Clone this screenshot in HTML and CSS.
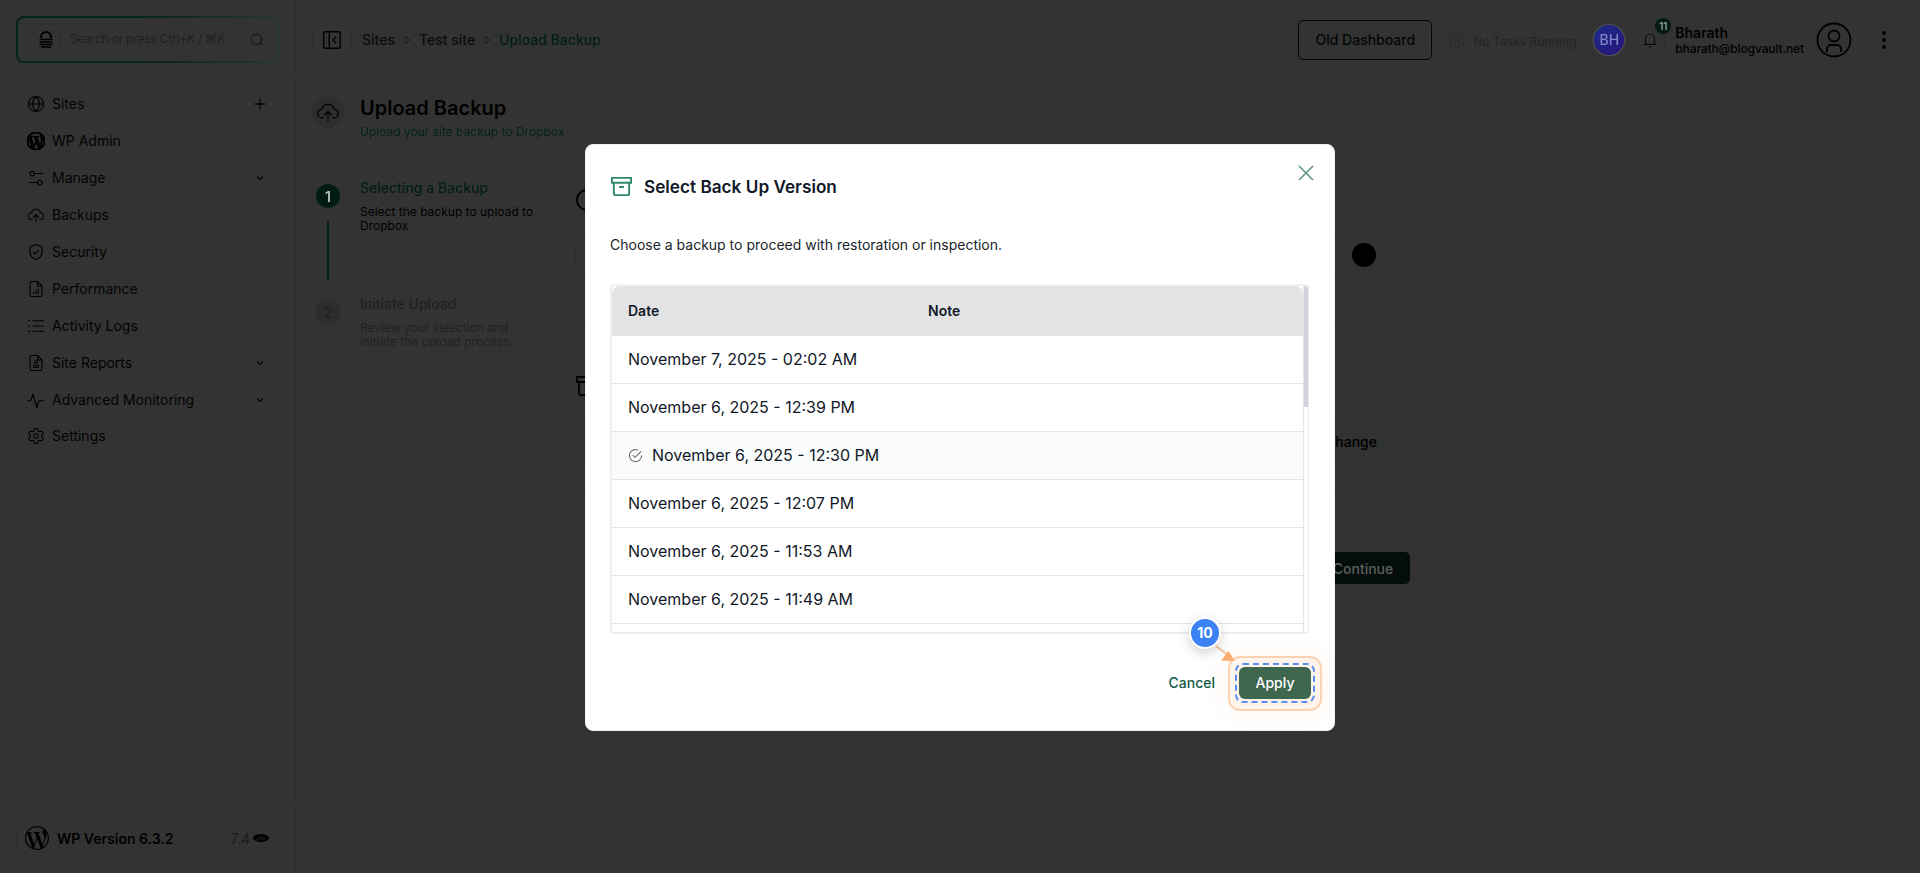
FILE: index.html
```html
<!DOCTYPE html>
<html lang="en">
<head>
  <meta charset="UTF-8">
  <title>Upload Backup</title>
  <link rel="stylesheet" href="styles.css">
</head>
<body>

  <svg class="defs" width="0" height="0">
    <symbol id="wp" viewBox="0 0 24 24">
      <path fill="currentColor" d="M21.469 6.825c.84 1.537 1.318 3.3 1.318 5.175 0 3.979-2.156 7.456-5.363 9.325l3.295-9.527c.615-1.54.82-2.771.82-3.864 0-.405-.026-.78-.07-1.11m-7.981.105c.647-.03 1.232-.105 1.232-.105.582-.075.514-.93-.067-.899 0 0-1.755.135-2.88.135-1.064 0-2.85-.15-2.85-.15-.585-.03-.661.855-.075.885 0 0 .54.061 1.125.09l1.68 4.605-2.37 7.08L5.354 6.9c.649-.03 1.234-.1 1.234-.1.585-.075.516-.93-.065-.896 0 0-1.746.138-2.874.138-.2 0-.438-.008-.69-.015C4.911 3.15 8.235 1.215 12 1.215c2.809 0 5.365 1.072 7.286 2.833-.046-.003-.091-.009-.141-.009-1.06 0-1.812.923-1.812 1.914 0 .89.513 1.643 1.06 2.531.411.72.89 1.643.89 2.977 0 .915-.354 1.994-.821 3.479l-1.075 3.585-3.9-11.61.001.014zM12 22.784c-1.059 0-2.081-.153-3.048-.437l3.237-9.406 3.315 9.087c.024.053.05.101.078.149-1.12.393-2.325.609-3.582.609M1.211 12c0-1.564.336-3.05.935-4.39L7.29 21.709C3.694 19.96 1.212 16.271 1.211 12M12 0C5.385 0 0 5.385 0 12s5.385 12 12 12 12-5.385 12-12S18.615 0 12 0"/>
    </symbol>
    <symbol id="cloud" viewBox="0 0 24 24">
      <path d="M7 18H6.500A4.500 4.500 0 0 1 6 9a6.200 6.200 0 0 1 12 0 4.500 4.500 0 0 1-.5 9H17M12 21v-9M8.500 15l3.500-3.500 3.500 3.500"/>
    </symbol>
    <symbol id="archive" viewBox="0 0 24 24">
      <path d="M2 3h20v5H2zM4 8v11a2 2 0 0 0 2 2h12a2 2 0 0 0 2-2V8M9.500 12.500h5"/>
    </symbol>
    <symbol id="chev" viewBox="0 0 12 12">
      <path d="M3 4.500 6 7.500 9 4.500"/>
    </symbol>
  </svg>

  <div class="app">
    <!-- sidebar -->
    <aside class="sidebar">
      <div class="side-top">
        <div class="search-box above">
          <span class="lock-box">
            <svg class="lock-ico" viewBox="0 0 18 18"><path d="M4 7V6a5 5 0 0 1 10 0v1" stroke-width="2"/><path d="M2.500 8.500h13M2.500 11h13M2.500 13.500h13M4 16h10" stroke-width="1.500"/></svg>
          </span>
          <span class="search-text">Search or press Ctrl+K / ⌘K</span>
          <svg class="ico search-ico" viewBox="0 0 24 24"><circle cx="11" cy="11" r="8"/><path d="m20 20-3-3"/></svg>
        </div>
      </div>

      <nav class="side-nav">
        <a class="nav-row">
          <svg class="ico" viewBox="0 0 24 24"><circle cx="12" cy="12" r="10"/><path d="M2 12h20M12 2c-6 6-6 14 0 20M12 2c6 6 6 14 0 20"/></svg>
          <span>Sites</span>
          <svg class="nav-plus" viewBox="0 0 14 14"><path d="M7 1v12M1 7h12"/></svg>
        </a>
        <a class="nav-row">
          <svg class="ico ico-wp"><use href="#wp"/></svg>
          <span>WP Admin</span>
        </a>
        <a class="nav-row">
          <svg class="ico" viewBox="0 0 24 24"><circle cx="7" cy="6" r="3"/><circle cx="17" cy="18" r="3"/><path d="M10 6h11M3 18h11"/></svg>
          <span>Manage</span>
          <svg class="nav-chev"><use href="#chev"/></svg>
        </a>
        <a class="nav-row">
          <svg class="ico"><use href="#cloud"/></svg>
          <span>Backups</span>
        </a>
        <a class="nav-row">
          <svg class="ico" viewBox="0 0 24 24"><path d="M12 2 4 5v7c0 5 3.500 8.500 8 10 4.500-1.500 8-5 8-10V5zM8.500 12l2.500 2.500 4.500-4.500"/></svg>
          <span>Security</span>
        </a>
        <a class="nav-row">
          <svg class="ico" viewBox="0 0 24 24"><path d="M14 2H6a2 2 0 0 0-2 2v16a2 2 0 0 0 2 2h12a2 2 0 0 0 2-2V8zM14 2v6h6M9 18v-2M12 18v-4M15 18v-6"/></svg>
          <span>Performance</span>
        </a>
        <a class="nav-row">
          <svg class="ico" viewBox="0 0 24 24"><path d="M8 5h14M8 12h14M8 19h14M2 5h2M2 12h2M2 19h2"/></svg>
          <span>Activity Logs</span>
        </a>
        <a class="nav-row">
          <svg class="ico" viewBox="0 0 24 24"><path d="M14 2H6a2 2 0 0 0-2 2v16a2 2 0 0 0 2 2h12a2 2 0 0 0 2-2V8zM14 2v6h6"/><circle cx="12" cy="11" r="2"/><path d="M9 18v-3h6v3z"/></svg>
          <span>Site Reports</span>
          <svg class="nav-chev"><use href="#chev"/></svg>
        </a>
        <a class="nav-row">
          <svg class="ico" viewBox="0 0 24 24"><path d="M1 13h4l3-9 5 18 3-9h6"/></svg>
          <span>Advanced Monitoring</span>
          <svg class="nav-chev"><use href="#chev"/></svg>
        </a>
        <a class="nav-row">
          <svg class="ico" viewBox="0 0 24 24"><circle cx="12" cy="12" r="3"/><path d="M10 2h4l.6 3 2.400 1.400 2.900-1 2 3.500-2.300 2v2.200l2.300 2-2 3.500-2.900-1L14.600 19l-.6 3h-4l-.6-3L7 17.600l-2.900 1-2-3.500 2.300-2v-2.200l-2.300-2 2-3.500 2.900 1L9.400 5z"/></svg>
          <span>Settings</span>
        </a>
      </nav>

      <div class="side-foot">
        <div class="wp-card">
          <svg class="wp-logo"><use href="#wp"/></svg>
          <span class="wp-name">WP Version 6.3.2</span>
          <span class="php-num">7.4</span>
          <svg class="php-badge" viewBox="0 0 16 8"><ellipse cx="8" cy="4" rx="8" ry="4"/><text x="8" y="5.800" text-anchor="middle">php</text></svg>
        </div>
      </div>
    </aside>

    <div class="main">
      <!-- top bar -->
      <header class="topbar">
        <button class="toggle-btn">
          <svg class="ico" viewBox="0 0 24 24"><rect x="3" y="3" width="18" height="18" rx="2"/><path d="M9 3v18M16 9l-3 3 3 3" /></svg>
        </button>
        <div class="crumbs">
          <span>Sites</span>
          <svg class="crumb-sep" viewBox="0 0 12 12"><path d="m4 2 4 4-4 4"/></svg>
          <span>Test site</span>
          <svg class="crumb-sep" viewBox="0 0 12 12"><path d="m4 2 4 4-4 4"/></svg>
          <span class="crumb-now above">Upload Backup</span>
        </div>
        <div class="top-right">
          <button class="old-btn">Old Dashboard</button>
          <div class="tasks">
            <svg class="ico" viewBox="0 0 24 24"><rect x="3" y="3" width="18" height="18" rx="3" stroke-dasharray="2 2"/><path d="M9 8v8M12 8v5M15 8v8" stroke-dasharray="2 1"/></svg>
            <span>No Tasks Running</span>
          </div>
          <div class="bh above">BH</div>
          <div class="bell">
            <svg class="ico" viewBox="0 0 24 24"><path d="M6 17V10a6 6 0 0 1 12 0v7l2 1H4zM11 21h2"/></svg>
            <span class="bell-num">11</span>
          </div>
          <div class="user">
            <div class="user-name">Bharath</div>
            <div class="user-mail">bharath@blogvault.net</div>
          </div>
          <svg class="avatar" viewBox="0 0 36 36"><circle cx="18" cy="18" r="16.500"/><circle cx="18" cy="14" r="5.500"/><path d="M11 30v-3a4 4 0 0 1 4-4h6a4 4 0 0 1 4 4v3"/></svg>
          <div class="dots"><i></i><i></i><i></i></div>
        </div>
      </header>

      <div class="page-title">
        <span class="title-ico"><svg class="ico"><use href="#cloud"/></svg></span>
        <div>
          <h1>Upload Backup</h1>
          <p class="above">Upload your site backup to Dropbox</p>
        </div>
      </div>

      <div class="content">
        <!-- steps -->
        <div class="steps">
          <div class="step">
            <div class="step-mark">
              <span class="step-num above">1</span>
              <span class="step-line above"></span>
            </div>
            <div>
              <div class="step-title above">Selecting a Backup</div>
              <div class="step-desc">Select the backup to upload to Dropbox</div>
            </div>
          </div>
          <div class="step step-off">
            <div class="step-mark">
              <span class="step-num">2</span>
            </div>
            <div>
              <div class="step-title">Initiate Upload</div>
              <div class="step-desc">Review your selection and initiate the upload process.</div>
            </div>
          </div>
        </div>

        <!-- panel behind the modal -->
        <div class="panel">
          <svg class="panel-ico" viewBox="0 0 24 24"><circle cx="12" cy="12" r="10"/></svg>
          <div class="panel-box">
            <span class="black-dot"></span>
          </div>
          <div class="panel-sep"></div>
          <svg class="panel-ico panel-ico2"><use href="#archive"/></svg>
          <div class="panel-box panel-box2">
            <span class="change-btn">Change</span>
          </div>
          <div class="panel-sep panel-sep2"></div>
          <div class="panel-foot">
            <button class="continue-btn above">Continue</button>
          </div>
        </div>
      </div>
    </div>
  </div>

  <div class="backdrop"></div>

  <!-- modal -->
  <div class="modal-wrap">
    <div class="modal">
      <div class="modal-head">
        <svg class="modal-ico"><use href="#archive"/></svg>
        <h2>Select Back Up Version</h2>
        <svg class="modal-close" viewBox="0 0 16 16"><path d="m1 1 14 14M15 1 1 15"/></svg>
      </div>
      <p class="modal-desc">Choose a backup to proceed with restoration or inspection.</p>

      <div class="table-box">
        <div class="table-scroll">
          <div class="t-head">
            <span class="t-date">Date</span>
            <span>Note</span>
          </div>
          <div class="t-row">November 7, 2025 - 02:02 AM</div>
          <div class="t-row">November 6, 2025 - 12:39 PM</div>
          <div class="t-row t-sel">
            <svg class="sel-ico" viewBox="0 0 16 16"><path d="M14.500 8A6.500 6.500 0 1 1 11 2.300"/><path d="m5 7.500 2.500 2.500L14 3.500"/></svg>
            November 6, 2025 - 12:30 PM
          </div>
          <div class="t-row">November 6, 2025 - 12:07 PM</div>
          <div class="t-row">November 6, 2025 - 11:53 AM</div>
          <div class="t-row">November 6, 2025 - 11:49 AM</div>
        </div>
        <div class="scroll-track"><div class="scroll-thumb"></div></div>
      </div>

      <div class="modal-foot">
        <button class="cancel-btn">Cancel</button>
        <div class="apply-wrap">
          <button class="apply-btn">Apply</button>
          <svg class="tip-arrow" viewBox="0 0 24 20"><path d="M1 1 14 11"/><path class="tip-head" d="M20 16 6 15.500 13.500 6z"/></svg>
          <span class="tip-badge">10</span>
        </div>
      </div>
    </div>
  </div>

</body>
</html>
```

FILE: styles.css
```css
* {
  box-sizing: border-box;
}

body {
  margin: 0;
  height: 873px;
  overflow: hidden;
  font-family: Inter, "Noto Sans", sans-serif;
  font-size: 14px;
  color: #111827;
  background-color: #fff;
}

button {
  font: inherit;
  cursor: pointer;
}

.defs {
  position: absolute;
}

/* keeps its colour: sits over the backdrop, so colours here are the final ones */
.above {
  position: relative;
  z-index: 20;
}

.ico {
  width: 18px;
  height: 18px;
  flex: none;
  fill: none;
  stroke: #000;
  stroke-width: 1.5;
  stroke-linecap: round;
  stroke-linejoin: round;
}

.ico-wp {
  color: #222;
}

.app {
  display: flex;
  height: 873px;
}

/* Sidebar */
.sidebar {
  width: 296px;
  flex: none;
  display: flex;
  flex-direction: column;
  border-right: 1px solid #e5e7eb;
}

.side-top {
  height: 80px;
  flex: none;
  padding: 16px 16px 0 16px;
  border-bottom: 1px solid #e5e7eb;
}

.search-box {
  height: 47px;
  display: flex;
  align-items: center;
  padding: 0 12px;
  border: 2px solid transparent;
  border-radius: 8px;
  background: linear-gradient(#333, #333) padding-box,
    linear-gradient(90deg, #02241a, #02241a 45%, #2a3630) border-box;
}

.lock-box {
  width: 31px;
  height: 31px;
  display: flex;
  align-items: center;
  justify-content: center;
  border: 1px solid #2e2e2e;
  border-radius: 6px;
}

.lock-ico {
  width: 18px;
  height: 18px;
  fill: none;
  stroke: #000;
}

.search-text {
  flex: 1;
  margin: -3px 0 0 9px;
  font-size: 12px;
  letter-spacing: -0.2px;
  color: #212121;
  white-space: nowrap;
}

.search-ico {
  width: 16px;
  height: 16px;
  stroke: #0e0e0e;
  stroke-width: 1.4;
}

.side-nav {
  flex: 1;
  padding: 5px 0 0;
}

.nav-row {
  height: 37px;
  display: flex;
  align-items: center;
  gap: 7px;
  padding: 0 29px 0 27px;
  color: #0d0d0d;
}

.nav-row:last-child {
  margin-top: -1px;
}

.nav-row span {
  flex: 1;
}

.nav-plus {
  width: 12px;
  height: 12px;
  fill: none;
  stroke: #111;
  stroke-width: 1.500;
}

.nav-chev {
  width: 12px;
  height: 12px;
  fill: none;
  stroke: #111;
  stroke-width: 1.200;
}

.side-foot {
  height: 73px;
  padding: 16px 17px 0 16px;
  border-top: 1px solid #e5e7eb;
}

.wp-card {
  height: 42px;
  display: flex;
  align-items: center;
  padding: 0 8px;
  border: 1px solid #e4e6e9;
  border-radius: 8px;
}

.wp-logo {
  width: 24px;
  height: 24px;
  color: #000;
}

.wp-name {
  flex: 1;
  margin-left: 8px;
  font-weight: 600;
  color: #000;
}

.php-num {
  margin-right: 3px;
  color: #8f8f8f;
}

.php-badge {
  width: 16px;
  height: 8px;
  fill: #000;
}

.php-badge text {
  font-size: 5.500px;
  font-family: "Liberation Sans", sans-serif;
  fill: #bbb;
}

/* Main */
.main {
  flex: 1;
  min-width: 0;
  display: flex;
  flex-direction: column;
}

.topbar {
  height: 80px;
  flex: none;
  display: flex;
  align-items: center;
  padding-left: 16px;
  border-bottom: 1px solid #e5e7eb;
}

.toggle-btn {
  width: 40px;
  height: 40px;
  display: flex;
  align-items: center;
  justify-content: center;
  padding: 0;
  background: none;
  border: 1px solid #e4e6e9;
  border-radius: 6px;
}

.toggle-btn .ico {
  width: 22px;
  height: 22px;
}

.crumbs {
  display: flex;
  align-items: center;
  margin-left: 10px;
  font-weight: 500;
  color: #374151;
}

.crumb-sep {
  width: 12px;
  height: 12px;
  margin: 0 6px;
  fill: none;
  stroke: #444;
  stroke-width: 1;
}

.crumb-now {
  color: #021f16;
}

.top-right {
  margin-left: auto;
  display: flex;
  align-items: center;
}

.old-btn {
  width: 134px;
  height: 40px;
  font-weight: 500;
  color: #06281c;
  background: none;
  border: 1px solid #06281c;
  border-radius: 5px;
}

.tasks {
  width: 144px;
  height: 41px;
  margin-left: 9px;
  display: flex;
  align-items: center;
  gap: 7px;
  padding: 4px 0 0 6px;
  font-size: 12px;
  font-weight: 500;
  color: #b5b8bd;
  white-space: nowrap;
  border: 1px solid #eceef0;
  border-radius: 6px;
}

.tasks .ico {
  stroke: #aaa;
  stroke-width: 1.200;
  margin-top: -4px;
}

.bh {
  width: 30px;
  height: 30px;
  margin-left: 9px;
  display: flex;
  align-items: center;
  justify-content: center;
  font-weight: 500;
  color: #7f86c6;
  background: linear-gradient(135deg, #1c2a8c, #2a1478);
  border-radius: 50%;
  box-shadow: 0 0 0 1.500px #4c4c50;
}

.bell {
  position: relative;
  width: 31px;
  height: 32px;
  margin-left: 10px;
  display: flex;
  align-items: center;
  justify-content: center;
  border: 1px solid #e4e6e9;
  border-radius: 5px;
}

.bell .ico {
  stroke-width: 1.200;
  stroke: #111;
}

.bell-num {
  position: absolute;
  top: -7px;
  right: -7px;
  z-index: 20;
  width: 16px;
  height: 16px;
  display: flex;
  align-items: center;
  justify-content: center;
  font-size: 10px;
  font-weight: 500;
  color: #a8b0ac;
  background-color: #021c13;
  border-radius: 50%;
}

.user {
  margin-left: 10px;
  color: #000;
}

.user-name {
  font-weight: 600;
  line-height: 17px;
}

.user-mail {
  font-size: 12px;
  font-weight: 500;
  letter-spacing: -0.120px;
  line-height: 15px;
}

.avatar {
  width: 36px;
  height: 36px;
  margin-left: 12px;
  fill: none;
  stroke: #000;
  stroke-width: 1.800;
}

.dots {
  width: 4px;
  margin: 0 34px 0 30px;
  display: flex;
  flex-direction: column;
  gap: 3px;
}

.dots i {
  width: 4px;
  height: 4px;
  background-color: #000;
  border-radius: 50%;
}

.page-title {
  height: 75px;
  flex: none;
  display: flex;
  align-items: flex-start;
  padding: 16px 0 0 16px;
  border-bottom: 1px solid #e5e7eb;
}

.title-ico {
  width: 32px;
  height: 32px;
  flex: none;
  margin-right: 16px;
  display: flex;
  align-items: center;
  justify-content: center;
  background-color: #e5e7eb;
  border-radius: 50%;
}

.title-ico .ico {
  width: 24px;
  height: 24px;
  stroke-width: 1.300;
}

.page-title h1 {
  margin: 0;
  font-size: 20px;
  line-height: 24px;
  font-weight: 600;
  color: #000;
}

.page-title p {
  margin: 4px 0 0;
  font-size: 12px;
  line-height: 16px;
  color: #02241a;
}

.content {
  flex: 1;
  display: flex;
}

.steps {
  width: 246px;
  flex: none;
  padding: 26px 0 0 20px;
  border-right: 1px solid #e5e7eb;
}

.step {
  display: flex;
  gap: 20px;
}

.step-mark {
  width: 24px;
  flex: none;
  padding-top: 3px;
  display: flex;
  flex-direction: column;
  align-items: center;
}

.step-num {
  width: 24px;
  height: 24px;
  display: flex;
  align-items: center;
  justify-content: center;
  font-weight: 600;
  color: #b8c4bd;
  background-color: #021c13;
  border-radius: 50%;
}

.step-line {
  width: 2px;
  height: 60px;
  margin: 12px 0 17px;
  background-color: #02241a;
}

.step-title {
  font-weight: 500;
  line-height: 14px;
  color: #021f16;
  margin-bottom: 10px;
}

.step-desc {
  font-size: 12px;
  line-height: 14px;
  color: #000;
}

.step-off .step-title,
.step-off .step-desc {
  color: #a3a7ad;
}

.step-off .step-num {
  color: #9ca3af;
  background-color: #dcdde0;
}

.panel {
  flex: 1;
  padding: 0 526px 0 33px;
}

.panel-ico {
  display: block;
  width: 24px;
  height: 24px;
  margin-top: 33px;
  fill: none;
  stroke: #000;
  stroke-width: 1.800;
}

.panel-box {
  height: 42px;
  margin-top: 22px;
  display: flex;
  align-items: center;
  justify-content: flex-end;
  padding-right: 17px;
  border: 1px solid #e4e6e9;
  border-radius: 10px;
}

.black-dot {
  width: 24px;
  height: 24px;
  background-color: #000;
  border-radius: 50%;
}

.panel-sep {
  height: 1px;
  margin-top: 48px;
  background-color: #e5e7eb;
}

.panel-ico2 {
  margin-top: 49px;
}

.panel-box2 {
  height: 43px;
  margin-top: 21px;
  border: 0;
  padding: 2px 17px 0 0;
  background-color: #f6f7fa;
  border-radius: 6px;
}

.change-btn {
  font-weight: 500;
  color: #000;
}

.panel-sep2 {
  margin-top: 33px;
}

.panel-foot {
  display: flex;
  justify-content: flex-end;
  margin: 56px -16px 0 0;
}

.continue-btn {
  width: 100px;
  height: 32px;
  padding: 0 0 0 6px;
  font-weight: 500;
  color: #5f5f5f;
  background-color: #030d0a;
  border: 0;
  border-radius: 5px;
}

/* Modal */
.backdrop {
  position: fixed;
  inset: 0;
  z-index: 10;
  background-color: rgba(0, 0, 0, 0.8);
}

.modal-wrap {
  position: fixed;
  inset: 0;
  z-index: 30;
  padding-top: 1px;
  display: flex;
  align-items: center;
  justify-content: center;
}

.modal {
  width: 750px;
  padding: 31px 25px 31px 24px;
  background-color: #fff;
  border: 1px solid #eef1f4;
  border-radius: 8px;
}

.modal-head {
  display: flex;
  align-items: center;
  height: 22px;
}

.modal-ico {
  width: 23px;
  height: 23px;
  fill: none;
  stroke: #2f8a6a;
  stroke-width: 2;
}

.modal-head h2 {
  flex: 1;
  margin: 0 0 0 11px;
  font-size: 17.200px;
  line-height: 22px;
  font-weight: 600;
  color: #111827;
}

.modal-close {
  width: 16px;
  height: 16px;
  align-self: flex-start;
  margin: -11px -5px 0 0;
  fill: none;
  stroke: #5f9584;
  stroke-width: 1.600;
}

.modal-desc {
  margin: 37px 0 0;
  line-height: 20px;
  color: #1a1f2b;
}

.table-box {
  height: 350px;
  margin-top: 29px;
  display: flex;
  overflow: hidden;
  border: 2px solid #eceef1;
  border-right-width: 1px;
  border-radius: 4px;
  border-top-color: #f1f2f4;
}

.table-scroll {
  flex: 1;
  overflow: hidden;
}

.t-head {
  height: 50px;
  display: flex;
  align-items: center;
  padding-left: 16px;
  font-weight: 600;
  color: #111827;
  background-color: #e3e3e5;
  border-radius: 8px 8px 0 0;
}

.t-date {
  width: 300px;
}

.t-row {
  height: 48px;
  display: flex;
  align-items: center;
  padding-left: 16px;
  font-size: 16px;
  color: #111827;
  border-bottom: 1px solid #e3e5e8;
}

.t-sel {
  background-color: #f9fcfb;
}

.sel-ico {
  width: 15px;
  height: 15px;
  margin-right: 9px;
  fill: none;
  stroke: #666;
  stroke-width: 1.100;
}

.scroll-track {
  width: 5px;
  flex: none;
  border-left: 1px solid #e3e5e8;
}

.scroll-thumb {
  height: 121px;
  background-color: #d1d5db;
}

.modal-foot {
  display: flex;
  align-items: center;
  justify-content: flex-end;
  gap: 24px;
  margin: 33px -2px 0 0;
}

.cancel-btn {
  padding: 0;
  font-weight: 500;
  color: #0f5a45;
  background: none;
  border: 0;
}

.apply-wrap {
  position: relative;
  z-index: 0;
}

.apply-wrap::before {
  content: "";
  position: absolute;
  inset: -11px -11px -12px -11px;
  z-index: -1;
  background-color: #fff4ec;
  border: 2px solid #fcd3b2;
  border-radius: 12px;
  box-shadow: 0 0 24px rgba(251, 146, 60, 0.1);
}

.apply-wrap::after {
  content: "";
  position: absolute;
  inset: -4px;
  border: 2px dashed #5b8def;
  border-radius: 8px;
}

.apply-btn {
  display: block;
  width: 72px;
  height: 32px;
  padding: 0;
  font-weight: 500;
  color: #fff;
  background-color: #3f6750;
  border: 0;
  border-radius: 6px;
}

.tip-arrow {
  position: absolute;
  left: -24px;
  top: -22px;
  width: 24px;
  height: 20px;
  fill: none;
  stroke: #f7c39b;
  stroke-width: 2;
}

.tip-head {
  fill: #fbac6c;
  stroke: none;
}

.tip-badge {
  position: absolute;
  left: -50px;
  top: -50px;
  width: 32px;
  height: 32px;
  display: flex;
  align-items: center;
  justify-content: center;
  font-size: 14px;
  font-weight: 700;
  color: #fff;
  background-color: #3b82f6;
  border: 2px solid #fff;
  border-radius: 50%;
  box-shadow: 0 4px 12px rgba(0, 0, 0, 0.18);
}
```
